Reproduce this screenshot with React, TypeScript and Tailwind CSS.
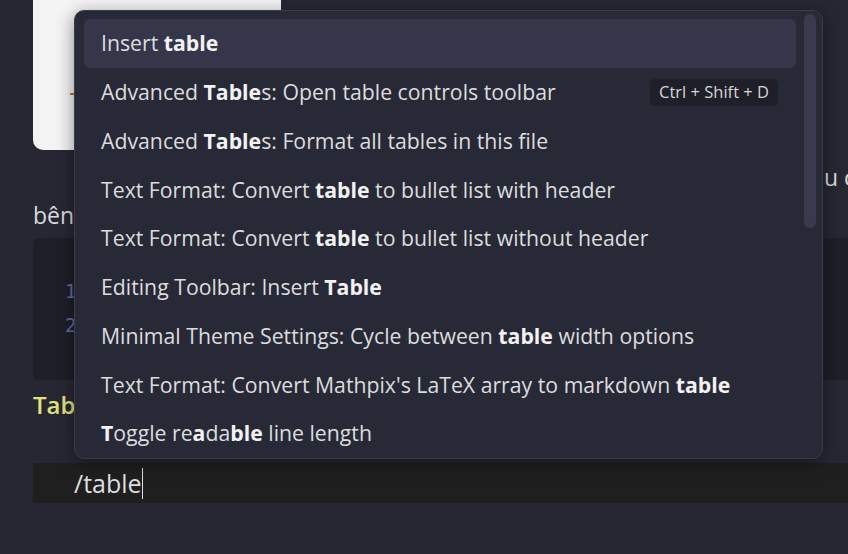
import React from "react";

type Seg = { t: string; b?: boolean };

const items: { segs: Seg[]; hotkey?: string; selected?: boolean }[] = [
  { segs: [{ t: "Insert " }, { t: "table", b: true }], selected: true },
  {
    segs: [{ t: "Advanced " }, { t: "Table", b: true }, { t: "s: Open table controls toolbar" }],
    hotkey: "Ctrl + Shift + D",
  },
  { segs: [{ t: "Advanced " }, { t: "Table", b: true }, { t: "s: Format all tables in this file" }] },
  { segs: [{ t: "Text Format: Convert " }, { t: "table", b: true }, { t: " to bullet list with header" }] },
  { segs: [{ t: "Text Format: Convert " }, { t: "table", b: true }, { t: " to bullet list without header" }] },
  { segs: [{ t: "Editing Toolbar: Insert " }, { t: "Table", b: true }] },
  { segs: [{ t: "Minimal Theme Settings: Cycle between " }, { t: "table", b: true }, { t: " width options" }] },
  { segs: [{ t: "Text Format: Convert Mathpix's LaTeX array to markdown " }, { t: "table", b: true }] },
  {
    segs: [
      { t: "T", b: true },
      { t: "oggle re" },
      { t: "a", b: true },
      { t: "da" },
      { t: "ble", b: true },
      { t: " line length" },
    ],
  },
];

const font = { fontFamily: '"Open Sans", "Noto Sans", sans-serif' };

export default function App() {
  return (
    <div
      className="relative w-[848px] h-[554px] overflow-hidden bg-[#262733] text-[#dcdcdc]"
      style={font}
    >
      {/* background document */}
      <div className="flex flex-col pl-[33px] w-[848px]">
        <div className="w-[248px] h-[150px] bg-[#f4f4f4] rounded-bl-[10px] rounded-br-[10px] relative">
          <div className="absolute left-[37px] top-[93px] w-[6px] h-[2px] bg-[#b07a3a]" />
        </div>
        <div className="h-[42px] mt-[6px] text-[23px] leading-[42px] pl-[791px] whitespace-nowrap">u cần</div>
        <div className="h-[40px] text-[23px] leading-[34px] whitespace-nowrap">bên</div>
        <div className="h-[142px] w-[830px] bg-[#1e1f27] rounded-[6px] flex flex-col pl-[32px] pt-[41px] gap-[10px] text-[19px] text-[#5b6ea6]" style={{ fontFamily: '"DejaVu Sans Mono", monospace' }}>
          <div className="leading-[24px]">1</div>
          <div className="leading-[24px]">2</div>
        </div>
        <div className="h-[50px] text-[24px] leading-[50px] font-semibold text-[#e4e37a]">Table</div>
        <div className="h-[40px] mt-[33px] w-[830px] bg-[#1f1f1f] flex items-center pl-[41px] text-[25px]">
          <span className="leading-[30px] text-[#dedede]">/table</span>
          <span className="w-[1px] h-[31px] bg-[#e0e0e0]" />
        </div>
      </div>

      {/* command popup */}
      <div className="absolute left-[74px] top-[10px] w-[749px] h-[449px] rounded-[10px] border border-[#3a3b4b] bg-[#282936] shadow-[0_4px_18px_rgba(0,0,0,0.45)] overflow-hidden">
        <div className="flex h-full">
          <div className="flex-1 flex flex-col pt-[8px] pl-[9px]">
            {items.map((it, i) => (
              <div
                key={i}
                className={
                  "h-[48.75px] shrink-0 flex items-center justify-between pl-[17px] pr-[18px] rounded-[6px] text-[21.25px] whitespace-nowrap " +
                  (it.selected ? "bg-[#35364a]" : "")
                }
              >
                <span className="text-[#dcddde]">
                  {it.segs.map((s, j) =>
                    s.b ? (
                      <span key={j} className="font-bold text-[#f2f2f2]">
                        {s.t}
                      </span>
                    ) : (
                      <span key={j}>{s.t}</span>
                    )
                  )}
                </span>
                {it.hotkey && (
                  <span className="h-[27px] px-[9px] flex items-center rounded-[5px] bg-[#1e1f29] text-[16.5px] text-[#d6d6d6]">
                    {it.hotkey}
                  </span>
                )}
              </div>
            ))}
          </div>
          <div className="w-[26px] shrink-0 flex justify-center pt-[3px] pl-[1px]">
            <div className="w-[12px] h-[214px] rounded-full bg-[#393a4d]" />
          </div>
        </div>
      </div>
    </div>
  );
}
